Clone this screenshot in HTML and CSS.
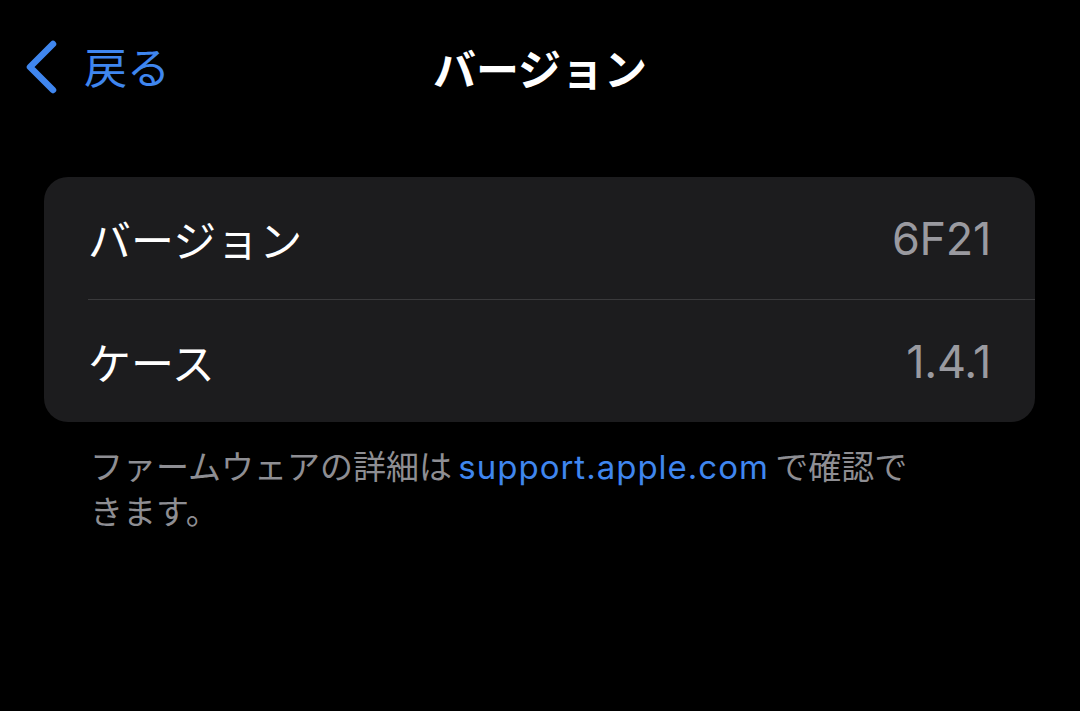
FILE: index.html
```html
<!DOCTYPE html>
<html lang="ja">
<head>
<meta charset="utf-8">
<title>バージョン</title>
<link rel="stylesheet" href="styles.css">
</head>
<body>
<header class="navbar">
  <a class="back" href="#">
    <svg class="chevron" viewBox="0 0 36 56" width="36" height="56" aria-hidden="true">
      <path d="M28 5 L5 28 L28 51" fill="none" stroke="currentColor" stroke-width="6.5" stroke-linecap="round" stroke-linejoin="round"/>
    </svg>
    <span class="back-label">戻る</span>
  </a>
  <h1 class="title">バージョン</h1>
  <div class="spacer"></div>
</header>
<main class="content">
  <section class="card">
    <div class="row">
      <span class="label">バージョン</span>
      <span class="value">6F21</span>
    </div>
    <div class="row">
      <span class="label">ケース</span>
      <span class="value">1.4.1</span>
    </div>
  </section>
  <p class="footer">ファームウェアの詳細は <a class="link" href="#">support.apple.com</a> で確認できます。</p>
</main>
</body>
</html>
```

FILE: styles.css
```css
html, body {
  margin: 0;
  padding: 0;
  background: #000;
}
body {
  width: 1080px;
  height: 711px;
  overflow: hidden;
  font-family: "Noto Sans CJK JP", "Noto Sans", sans-serif;
  color: #fff;
}
.navbar {
  height: 134px;
  display: grid;
  grid-template-columns: 1fr auto 1fr;
  align-items: center;
}
.back {
  display: flex;
  align-items: center;
  gap: 23px;
  padding-left: 25px;
  color: #3f86ef;
  text-decoration: none;
}
.chevron {
  display: block;
}
.back-label {
  font-size: 43px;
  line-height: 1;
  position: relative;
  top: -2px;
}
.title {
  margin: 0;
  font-size: 43px;
  font-weight: 700;
  line-height: 1;
  letter-spacing: 0;
}
.content {
  padding: 43px 45px 0 44px;
}
.card {
  background: #1c1c1e;
  border-radius: 24px;
  overflow: hidden;
}
.row {
  height: 122px;
  margin-left: 44px;
  padding-right: 44px;
  display: flex;
  align-items: center;
  justify-content: space-between;
}
.row + .row {
  border-top: 1px solid #3a3a3c;
}
.label {
  font-size: 43px;
  line-height: 1;
  color: #fff;
}
.value {
  font-family: "Inter", "Liberation Sans", sans-serif;
  font-size: 45px;
  line-height: 1;
  color: #9a9aa0;
  letter-spacing: -0.3px;
}
.footer {
  margin: 23px 0 0 0;
  padding-left: 46px;
  max-width: 840px;
  font-family: "Inter", "Noto Sans CJK JP", sans-serif;
  font-size: 33px;
  line-height: 45px;
  word-spacing: -3px;
  color: #8e8e93;
}
.link {
  color: #3f86ef;
  text-decoration: none;
  letter-spacing: 1px;
}
```
